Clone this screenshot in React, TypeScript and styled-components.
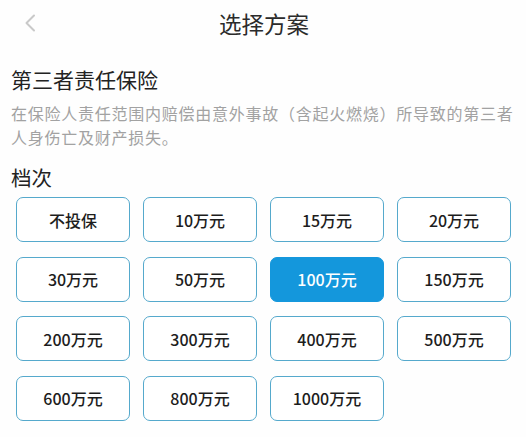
import { useState } from "react";
import styled, { createGlobalStyle } from "styled-components";

const GlobalStyle = createGlobalStyle`
  html, body {
    margin: 0;
    padding: 0;
    background: #fefefe;
  }
  body {
    font-family: "Noto Sans CJK SC", "Noto Sans", sans-serif;
    color: #222;
  }
`;

const Page = styled.div`
  width: 526px;
  min-height: 437px;
  background: #fefefe;
`;

const NavBar = styled.div`
  position: relative;
  height: 44px;
  display: flex;
  align-items: center;
  justify-content: center;
`;

const BackButton = styled.div`
  position: absolute;
  left: 22px;
  top: 13px;
  width: 16px;
  height: 20px;
  display: flex;
  align-items: center;
  justify-content: center;
`;

const NavTitle = styled.div`
  font-size: 22.5px;
  line-height: 28px;
  color: #2b2b2b;
  margin-left: 2px;
  margin-top: 1px;
`;

const Content = styled.div`
  padding: 21px 8px 0 11px;
`;

const SectionTitle = styled.div`
  font-size: 21px;
  line-height: 28px;
  color: #222;
`;

const Desc = styled.div`
  margin-top: 8px;
  font-size: 16px;
  letter-spacing: 0.75px;
  line-height: 24px;
  color: #a2a2a2;
`;

const LevelLabel = styled.div`
  margin-top: 14px;
  font-size: 20.5px;
  line-height: 28px;
  color: #222;
`;

const Grid = styled.div`
  margin-top: 6px;
  padding-left: 5px;
  display: grid;
  grid-template-columns: repeat(4, 114px);
  grid-auto-rows: 45px;
  column-gap: 13px;
  row-gap: 14.6px;
`;

const Option = styled.div<{ $active: boolean }>`
  box-sizing: border-box;
  display: flex;
  align-items: center;
  justify-content: center;
  border-radius: 7px;
  border: 1px solid ${(p) => (p.$active ? "#1497dc" : "#55a9cc")};
  background: ${(p) => (p.$active ? "#1497dc" : "#fff")};
  color: ${(p) => (p.$active ? "#fff" : "#1d1d1d")};
  font-size: 16px;
  font-weight: 500;
  cursor: pointer;
`;

const options = [
  "不投保",
  "10万元",
  "15万元",
  "20万元",
  "30万元",
  "50万元",
  "100万元",
  "150万元",
  "200万元",
  "300万元",
  "400万元",
  "500万元",
  "600万元",
  "800万元",
  "1000万元",
];

export default function App() {
  const [selected, setSelected] = useState("100万元");
  return (
    <Page>
      <GlobalStyle />
      <NavBar>
        <BackButton>
          <svg width="12" height="18" viewBox="0 0 12 18">
            <path d="M10 1.5 L2.5 9 L10 16.5" fill="none" stroke="#c9c9c9" strokeWidth="2" strokeLinecap="round" strokeLinejoin="round" />
          </svg>
        </BackButton>
        <NavTitle>选择方案</NavTitle>
      </NavBar>
      <Content>
        <SectionTitle>第三者责任保险</SectionTitle>
        <Desc>在保险人责任范围内赔偿由意外事故（含起火燃烧）所导致的第三者人身伤亡及财产损失。</Desc>
        <LevelLabel>档次</LevelLabel>
        <Grid>
          {options.map((o) => (
            <Option key={o} $active={o === selected} onClick={() => setSelected(o)}>
              {o}
            </Option>
          ))}
        </Grid>
      </Content>
    </Page>
  );
}
